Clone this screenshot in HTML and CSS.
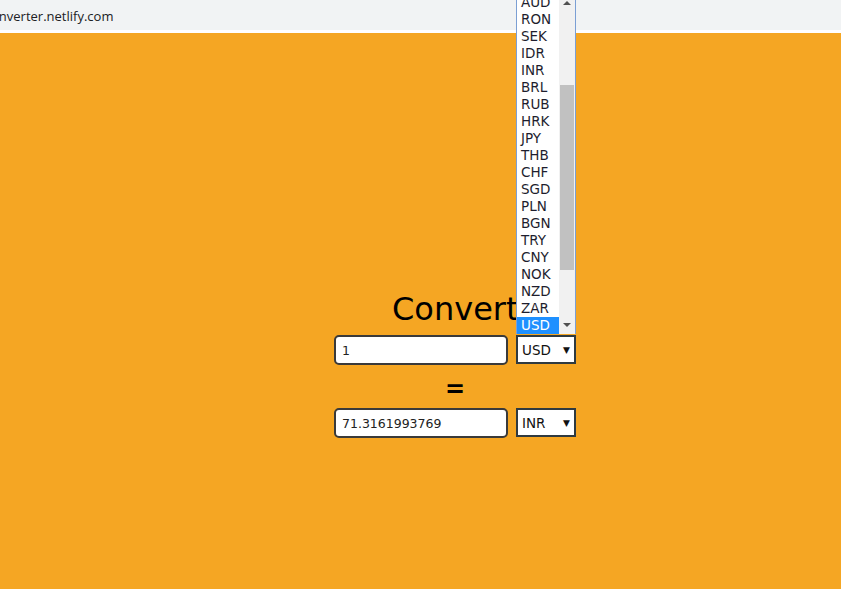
FILE: index.html
```html
<!DOCTYPE html>
<html>
<head>
<meta charset="utf-8">
<link rel="stylesheet" href="styles.css">
</head>
<body>
<div class="urlbar"><span class="url">onverter.netlify.com</span></div>
<main class="page">
  <section class="converter">
    <h1 class="title">Converter</h1>
    <div class="row">
      <div class="field">1</div>
      <div class="select">USD<span class="caret">▼</span></div>
    </div>
    <div class="equals">=</div>
    <div class="row">
      <div class="field">71.3161993769</div>
      <div class="select">INR<span class="caret">▼</span></div>
    </div>
    <div class="popup">
      <ul class="options">
        <li>AUD</li><li>RON</li><li>SEK</li><li>IDR</li><li>INR</li><li>BRL</li><li>RUB</li><li>HRK</li><li>JPY</li><li>THB</li><li>CHF</li><li>SGD</li><li>PLN</li><li>BGN</li><li>TRY</li><li>CNY</li><li>NOK</li><li>NZD</li><li>ZAR</li><li class="sel">USD</li>
      </ul>
      <div class="scroll">
        <span class="arrow up"></span>
        <span class="thumb"></span>
        <span class="arrow down"></span>
      </div>
    </div>
  </section>
</main>
</body>
</html>
```
FILE: styles.css
```css
html, body { margin: 0; padding: 0; }
body {
  background: #f5a623;
  font-family: "DejaVu Sans", sans-serif;
  width: 841px;
  height: 589px;
  overflow: hidden;
}
.urlbar {
  height: 30px;
  background: #f1f3f4;
  border-bottom: 3px solid #ffffff;
  display: flex;
  align-items: center;
  overflow: hidden;
}
.url {
  font-family: "Open Sans", sans-serif;
  font-size: 13px;
  color: #202124;
  margin-left: -9px;
  padding-top: 1px;
}
.page {
  display: flex;
  padding-left: 334px;
}
.converter {
  position: relative;
  width: 242px;
  display: flex;
  flex-direction: column;
  padding-top: 256px;
}
.title {
  margin: 0 0 6px 58px;
  font-size: 32px;
  line-height: 40px;
  font-weight: normal;
  color: #000;
  white-space: nowrap;
}
.row {
  display: flex;
  gap: 8px;
  height: 30px;
}
.field {
  box-sizing: border-box;
  width: 174px;
  height: 30px;
  border: 2px solid #3a3a3a;
  border-radius: 5px;
  background: #fff;
  font-size: 12.5px;
  color: #222;
  padding-left: 6px;
  display: flex;
  align-items: center;
}
.select {
  box-sizing: border-box;
  width: 60px;
  height: 29px;
  border: 2px solid #2f3a40;
  background: #fff;
  font-size: 13.5px;
  color: #111;
  padding-left: 4px;
  display: flex;
  align-items: center;
  justify-content: space-between;
  padding-right: 4px;
}
.caret { font-size: 9px; color: #111; }
.equals {
  box-sizing: border-box;
  height: 43px;
  padding-top: 6px;
  text-align: center;
  font-size: 24px;
  font-weight: bold;
  line-height: 37px;
  color: #000;
}
.popup {
  position: absolute;
  left: 182px;
  top: -33px;
  width: 60px;
  height: 334px;
  box-sizing: border-box;
  border-left: 1px solid #7b9fd4;
  border-right: 1px solid #7b9fd4;
  background: #fff;
  display: flex;
  overflow: hidden;
}
.options {
  list-style: none;
  margin: -6px 0 0 0;
  padding: 0;
  width: 42px;
}
.options li {
  height: 17px;
  line-height: 17px;
  font-size: 13.5px;
  color: #1e1e2e;
  padding-left: 4px;
}
.options li.sel {
  background: #1e90ff;
  color: #fff;
}
.scroll {
  width: 16px;
  background: #f1f1f1;
  position: relative;
}
.thumb {
  position: absolute;
  left: 1px;
  right: 1px;
  top: 85px;
  height: 185px;
  background: #c1c1c1;
}
.arrow {
  position: absolute;
  left: 4px;
  width: 0;
  height: 0;
  border-left: 4px solid transparent;
  border-right: 4px solid transparent;
}
.arrow.up { top: 1px; border-bottom: 4px solid #505050; }
.arrow.down { bottom: 7px; border-top: 4px solid #505050; }
```
